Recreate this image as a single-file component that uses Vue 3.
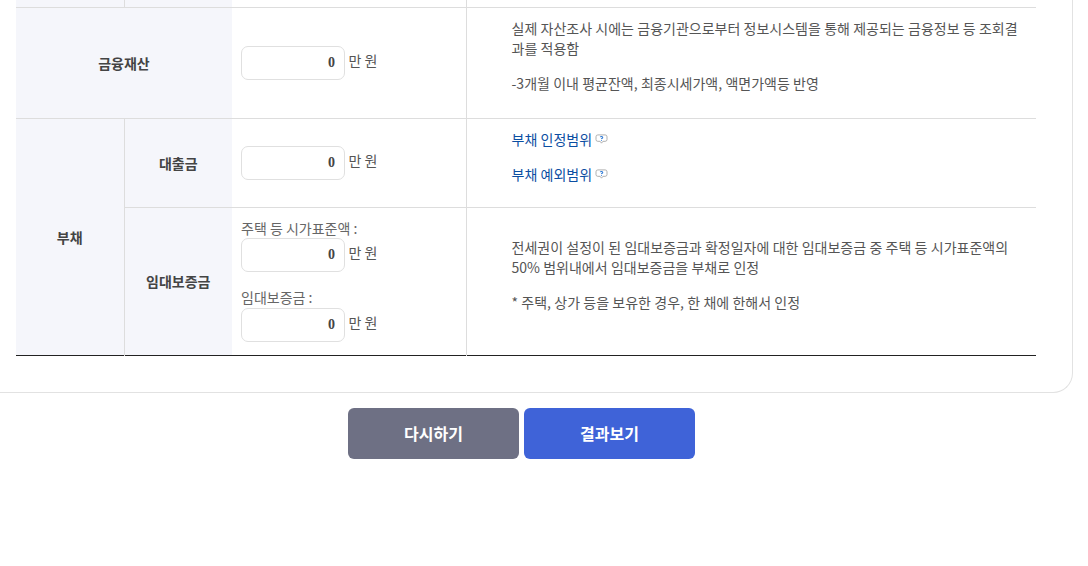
<script setup>
const unit = '만 원'
</script>

<template>
  <div class="page">
    <div class="card">
      <table class="calc-table">
        <colgroup>
          <col class="c1" />
          <col class="c2" />
          <col class="c3" />
          <col />
        </colgroup>
        <tbody>
          <tr class="cut-row">
            <th></th>
            <th></th>
            <td class="field-cell"></td>
            <td></td>
          </tr>
          <tr class="row-finance">
            <th colspan="2">금융재산</th>
            <td class="field-cell">
              <div class="field">
                <input class="amount" type="text" value="0" />
                <span class="unit">{{ unit }}</span>
              </div>
            </td>
            <td class="desc">
              <p>실제 자산조사 시에는 금융기관으로부터 정보시스템을 통해 제공되는 금융정보 등 조회결과를 적용함</p>
              <p>-3개월 이내 평균잔액, 최종시세가액, 액면가액등 반영</p>
            </td>
          </tr>
          <tr class="row-loan">
            <th rowspan="2" class="debt">부채</th>
            <th class="sub-loan">대출금</th>
            <td class="field-cell">
              <div class="field">
                <input class="amount" type="text" value="0" />
                <span class="unit">{{ unit }}</span>
              </div>
            </td>
            <td class="desc links">
              <p>
                <a>부채 인정범위</a>
                <svg class="help" width="14" height="12" viewBox="0 0 14 12">
                  <path d="M3 1h8a2 2 0 0 1 2 2v3a2 2 0 0 1-2 2H8.5L7 10 5.5 8H3a2 2 0 0 1-2-2V3a2 2 0 0 1 2-2z" fill="#fff" stroke="#a8a8a8" />
                  <path d="M5.6 3.4c.4-.8 2.8-.9 2.8.4 0 .9-1.4.8-1.4 1.7" fill="none" stroke="#2f7bd6" stroke-width="1.1" />
                  <circle cx="7" cy="6.8" r=".6" fill="#2f7bd6" />
                </svg>
              </p>
              <p>
                <a>부채 예외범위</a>
                <svg class="help" width="14" height="12" viewBox="0 0 14 12">
                  <path d="M3 1h8a2 2 0 0 1 2 2v3a2 2 0 0 1-2 2H8.5L7 10 5.5 8H3a2 2 0 0 1-2-2V3a2 2 0 0 1 2-2z" fill="#fff" stroke="#a8a8a8" />
                  <path d="M5.6 3.4c.4-.8 2.8-.9 2.8.4 0 .9-1.4.8-1.4 1.7" fill="none" stroke="#2f7bd6" stroke-width="1.1" />
                  <circle cx="7" cy="6.8" r=".6" fill="#2f7bd6" />
                </svg>
              </p>
            </td>
          </tr>
          <tr class="row-deposit">
            <th class="sub-deposit">임대보증금</th>
            <td class="field-cell stacked">
              <label>주택 등 시가표준액 :</label>
              <div class="field">
                <input class="amount" type="text" value="0" />
                <span class="unit">{{ unit }}</span>
              </div>
              <label class="second">임대보증금 :</label>
              <div class="field">
                <input class="amount" type="text" value="0" />
                <span class="unit">{{ unit }}</span>
              </div>
            </td>
            <td class="desc deposit">
              <p>전세권이 설정이 된 임대보증금과 확정일자에 대한 임대보증금 중 주택 등 시가표준액의 50% 범위내에서 임대보증금을 부채로 인정</p>
              <p>* 주택, 상가 등을 보유한 경우, 한 채에 한해서 인정</p>
            </td>
          </tr>
        </tbody>
      </table>
    </div>
    <div class="actions">
      <button class="btn reset">다시하기</button>
      <button class="btn submit">결과보기</button>
    </div>
  </div>
</template>

<style>
html, body {
  margin: 0;
  background: #fff;
  overflow: hidden;
}
</style>

<style scoped>
.page {
  height: 566px;
  font-family: "Noto Sans CJK KR", "Noto Sans", sans-serif;
  color: #555;
  font-size: 14px;
}

.card {
  width: 1073px;
  box-sizing: border-box;
  padding: 0 36px 36px 16px;
  border-right: 1px solid #e2e2e2;
  border-bottom: 1px solid #e2e2e2;
  border-bottom-right-radius: 20px;
}

.calc-table {
  width: 1020px;
  table-layout: fixed;
  border-collapse: collapse;
  border-bottom: 1px solid #222;
}

.c1 { width: 108px; }
.c2 { width: 108px; }
.c3 { width: 234px; }

.calc-table th,
.calc-table td {
  box-sizing: border-box;
  padding: 0;
  border-top: 1px solid #ddd;
  border-left: 1px solid #ddd;
}

.calc-table th {
  background: #f5f6fb;
  font-size: 14px;
  font-weight: 700;
  color: #444;
  text-align: center;
}

.calc-table tr > :first-child {
  border-left: 0;
}

.calc-table td.field-cell {
  border-left: 0;
}

.calc-table tr.row-loan > .sub-loan,
.calc-table tr.row-deposit > .sub-deposit {
  border-left: 1px solid #ddd;
}

.cut-row th,
.cut-row td {
  border-top: 0 !important;
  height: 7px;
}

.cut-row th:first-child {
  border-right: 1px solid #ddd;
}

.row-finance th,
.row-finance td { height: 111px; }

.row-loan th,
.row-loan td { height: 89px; }

.row-deposit th,
.row-deposit td { height: 148px; }

.field-cell {
  padding-left: 9px !important;
}

.field-cell.stacked {
  padding-top: 10px !important;
  vertical-align: top;
}

.field {
  display: flex;
  align-items: center;
  gap: 3.5px;
}

.amount {
  width: 104px;
  height: 34px;
  box-sizing: border-box;
  padding: 0 9px 0 0;
  border: 1px solid #e0e0e0;
  border-radius: 7px;
  background: #fff;
  color: #444;
  font-family: "Liberation Serif", serif;
  font-size: 14px;
  font-weight: 700;
  text-align: right;
}

.unit {
  color: #555;
  padding-bottom: 6px;
}

label {
  display: block;
  height: 20px;
  line-height: 20px;
  color: #666;
}

label.second {
  margin-top: 16px;
  line-height: 18px;
}

.desc {
  padding: 0 17px 0 45px !important;
  line-height: 20px;
  word-spacing: 0.15px;
  vertical-align: middle;
}

.desc.links,
.desc.deposit {
  padding-top: 2px !important;
}

.desc p {
  margin: 0 0 15px;
}

.links a {
  color: #0b4ea2;
}

.help {
  width: 13px;
  height: 11px;
  margin-left: 3px;
}

.actions {
  display: flex;
  gap: 5px;
  padding: 15px 0 0 348px;
}

.btn {
  width: 171px;
  height: 51px;
  border: 0;
  border-radius: 6px;
  color: #fff;
  font-family: inherit;
  font-size: 16px;
  font-weight: 700;
}

.reset { background: #6e7084; }
.submit { background: #3f63d8; }
</style>
